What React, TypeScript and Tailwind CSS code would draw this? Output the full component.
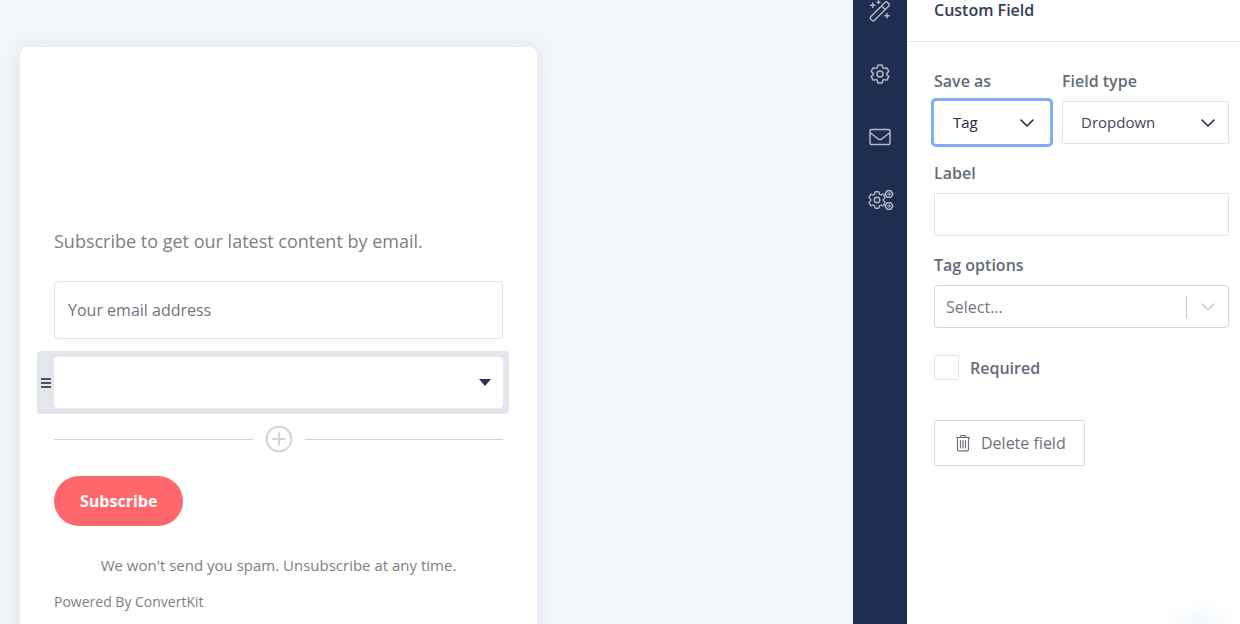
import type { ReactNode, SVGProps } from "react";
import { HiOutlineCog6Tooth } from "react-icons/hi2";
import { clsx } from "clsx";

const stroke: SVGProps<SVGSVGElement> = {
  fill: "none",
  stroke: "currentColor",
  strokeLinecap: "round",
  strokeLinejoin: "round",
  "aria-hidden": true,
};

const WandIcon = () => (
  <svg {...stroke} viewBox="0 0 22 22" strokeWidth={1.4} className="h-[22px] w-[22px]">
    <path d="M1.700 16.800 16.200 2.300a1.500 1.500 0 0 1 2.100 0l1.500 1.500a1.500 1.500 0 0 1 0 2.100L5.300 20.400a1.500 1.500 0 0 1-2.100 0l-1.500-1.500a1.500 1.500 0 0 1 0-2.100Z" />
    <path d="m12.600 5.900 3.600 3.600" />
    <path d="M3.800 3v4.400M1.600 5.200h4.400M18 13.500v4.400M15.800 15.700h4.400" />
    <path d="M9.500.8v2.800M8.100 2.200h2.800" />
  </svg>
);

const MailIcon = () => (
  <svg {...stroke} viewBox="0 0 22 22" strokeWidth={1.5} className="h-[22px] w-[22px]">
    <rect x="1" y="3.500" width="20" height="15" rx="1.600" />
    <path d="m1.500 7 7.600 5.800a3 3 0 0 0 3.800 0L20.500 7" />
  </svg>
);

const CogsIcon = () => (
  <span className="flex items-center">
    <HiOutlineCog6Tooth className="h-[22px] w-[22px] shrink-0" aria-hidden />
    <svg {...stroke} viewBox="0 0 10 22" strokeWidth={1.4} className="-ml-1 h-[22px] w-[10px] shrink-0">
      {[5, 17].map((cy) => (
        <g key={cy} transform={`translate(5 ${cy})`}>
          <path d="M-1.800-3.300h3.600L3.900 0 1.800 3.300h-3.600L-3.900 0Z" />
          <circle r="1.200" strokeWidth={1} />
        </g>
      ))}
    </svg>
  </span>
);

const TrashIcon = () => (
  <svg {...stroke} viewBox="0 0 16 18" strokeWidth={1.2} className="h-[18px] w-4">
    <path d="M1.500 3.500h13M5 3.500l1-2h4l1 2M2.500 3.500v12a1.300 1.300 0 0 0 1.300 1.300h8.400a1.300 1.300 0 0 0 1.300-1.300v-12" />
    <path d="M5.500 6.500v7.500M8 6.500v7.500M10.500 6.500v7.500" />
  </svg>
);

const ChevronIcon = ({ className }: { className?: string }) => (
  <svg {...stroke} viewBox="0 0 14 8" strokeWidth={1.6} className={clsx("pointer-events-none absolute h-2 w-3.5", className)}>
    <path d="m1 1 6 6 6-6" />
  </svg>
);

const navItems: { label: string; icon: ReactNode }[] = [
  { label: "Styles", icon: <WandIcon /> },
  { label: "Settings", icon: <HiOutlineCog6Tooth className="h-6 w-6" aria-hidden /> },
  { label: "Emails", icon: <MailIcon /> },
  { label: "Advanced", icon: <CogsIcon /> },
];

interface FieldProps {
  id: string;
  label: string;
  className?: string;
  children: ReactNode;
}

const Field = ({ id, label, className, children }: FieldProps) => (
  <div className={clsx("flex flex-col gap-2", className)}>
    <label htmlFor={id} className="text-base leading-6 font-semibold text-[#646b78]">
      {label}
    </label>
    <div className="relative flex items-center">{children}</div>
  </div>
);

const FormPreview = () => (
  <form
    className="flex min-h-screen w-full max-w-[517px] flex-col rounded-lg bg-white px-[34px] pt-[180px] shadow-[0_0_22px_rgba(40,60,90,0.10)]"
    onSubmit={(e) => e.preventDefault()}
  >
    <p className="text-lg leading-7 text-[#7b7f86]">Subscribe to get our latest content by email.</p>
    <input
      type="email"
      aria-label="Your email address"
      placeholder="Your email address"
      className="mt-[26px] h-[58px] rounded border border-[#e0e4e8] px-[13px] text-base text-[#6f747b] placeholder:text-[#6f747b]"
    />
    <div className="-mr-1.5 -ml-[17px] mt-3 flex items-center rounded bg-[#e3e6ea] py-1.5 pr-1.5">
      <button type="button" aria-label="Reorder field" className="flex w-[17px] flex-col items-center gap-0.5 text-[#4c535f]">
        <span className="h-0.5 w-2.5 bg-current" />
        <span className="h-0.5 w-2.5 bg-current" />
        <span className="h-0.5 w-2.5 bg-current" />
      </button>
      <div className="relative flex flex-1 items-center">
        <select aria-label="Custom field" className="h-[51px] w-full appearance-none rounded bg-white px-3.5 text-base" />
        <svg viewBox="0 0 12 7" className="pointer-events-none absolute right-3 h-[7px] w-3 fill-[#27334f]" aria-hidden>
          <path d="M0 0h12L6 7Z" />
        </svg>
      </div>
    </div>
    <div className="mt-[11px] flex items-center gap-3">
      <span className="h-px flex-1 bg-[#cfd4d9]" />
      <button type="button" aria-label="Add field" className="text-[#d0d5da]">
        <svg {...stroke} viewBox="0 0 28 28" strokeWidth={2} className="h-7 w-7">
          <circle cx="14" cy="14" r="12.300" />
          <path d="M14 8v12M8 14h12" />
        </svg>
      </button>
      <span className="h-px flex-1 bg-[#cfd4d9]" />
    </div>
    <button type="submit" className="mt-[23px] h-[50px] self-start rounded-full bg-[#ff676c] px-[26px] text-base font-bold text-white">
      Subscribe
    </button>
    <p className="mt-[27px] text-center text-[15px] leading-6 text-[#7b7f86]">We won't send you spam. Unsubscribe at any time.</p>
    <a href="#powered" className="mt-[13px] self-start text-sm leading-6 text-[#7b7f86]">
      Powered By ConvertKit
    </a>
  </form>
);

const FieldPanel = () => (
  <aside className="flex w-[333px] shrink-0 flex-col bg-white">
    <h2 className="border-b border-[#e3e7ea] pb-[21px] text-base leading-5 font-semibold text-[#333d52]">
      <span className="px-[27px]">Custom Field</span>
    </h2>
    <div className="flex flex-col pt-[27px] pr-[11px] pl-[27px]">
      <div className="flex gap-3">
        <Field id="save-as" label="Save as" className="w-[116px]">
          <select
            id="save-as"
            className="h-[43px] w-full appearance-none rounded-xs bg-white pr-8 pl-[19px] text-[15px] text-[#222c42] ring-3 ring-[#80adf2] outline-none"
          >
            <option>Tag</option>
            <option>Custom field</option>
          </select>
          <ChevronIcon className="right-4 text-[#222c42]" />
        </Field>
        <Field id="field-type" label="Field type" className="flex-1">
          <select
            id="field-type"
            className="h-[43px] w-full appearance-none rounded-xs border border-[#e0e4e8] bg-white pr-8 pl-[18px] text-[15px] text-[#404859]"
          >
            <option>Dropdown</option>
            <option>Text</option>
          </select>
          <ChevronIcon className="right-3.5 text-[#222c42]" />
        </Field>
      </div>
      <Field id="label" label="Label" className="mt-[17px]">
        <input id="label" type="text" className="h-[43px] w-full rounded-xs border border-[#e0e4e8] px-3 text-base text-[#404859]" />
      </Field>
      <Field id="tag-options" label="Tag options" className="mt-[17px]">
        <select
          id="tag-options"
          className="h-[43px] w-full appearance-none rounded border border-[#d3d6dd] bg-white pl-[11px] text-base text-[#74787f]"
        >
          <option>Select...</option>
        </select>
        <span className="pointer-events-none absolute right-[42px] h-[22px] w-px bg-[#cccccc]" />
        <ChevronIcon className="right-3.5 text-[#c8cacd]" />
      </Field>
      <label className="mt-[27px] flex items-center gap-[11px] text-base leading-6 font-semibold text-[#646b78]">
        <input type="checkbox" className="h-[25px] w-[25px] appearance-none rounded-xs border border-[#e0e4e8] bg-white" />
        Required
      </label>
      <button
        type="button"
        className="mt-10 flex h-[46px] items-center gap-2.5 self-start rounded-xs border border-[#d9dde3] pr-[18px] pl-5 text-base font-medium text-[#6c717b]"
      >
        <TrashIcon />
        Delete field
      </button>
    </div>
  </aside>
);

export default function App() {
  return (
    <div className="relative flex h-screen overflow-hidden bg-[#f2f6fa] font-['Open_Sans',sans-serif]">
      <main className="min-w-0 flex-1 px-5 pt-[47px]">
        <FormPreview />
      </main>
      <nav className="flex w-[54px] shrink-0 flex-col items-center gap-[41px] bg-[#1f2d50] text-[#b4b8c3]">
        {navItems.map(({ label, icon }) => (
          <button key={label} type="button" aria-label={label} className="flex h-[22px] items-center">
            {icon}
          </button>
        ))}
      </nav>
      <FieldPanel />
      <div className="pointer-events-none absolute right-0 bottom-0 h-6 w-20 bg-[radial-gradient(ellipse_at_bottom,#f3f7fa,transparent_70%)]" />
    </div>
  );
}
